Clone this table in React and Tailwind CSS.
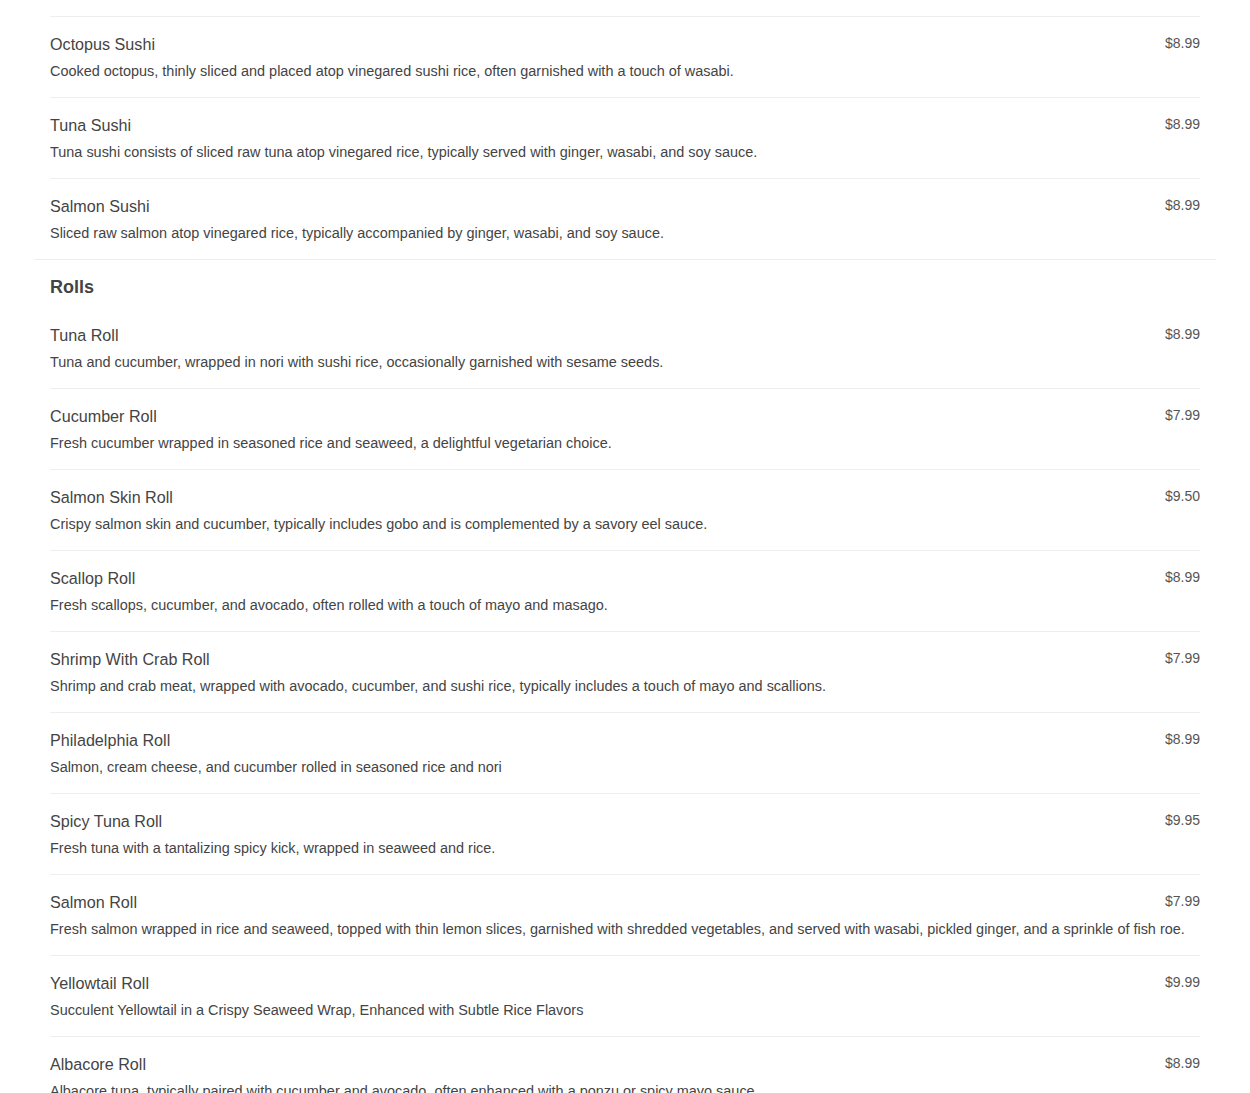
const sushi = [
  {
    name: "Yellowtail Sushi",
    description: "Fresh yellowtail slices atop vinegared rice, often garnished.",
    price: "$8.99",
  },
  {
    name: "Octopus Sushi",
    description:
      "Cooked octopus, thinly sliced and placed atop vinegared sushi rice, often garnished with a touch of wasabi.",
    price: "$8.99",
  },
  {
    name: "Tuna Sushi",
    description:
      "Tuna sushi consists of sliced raw tuna atop vinegared rice, typically served with ginger, wasabi, and soy sauce.",
    price: "$8.99",
  },
  {
    name: "Salmon Sushi",
    description:
      "Sliced raw salmon atop vinegared rice, typically accompanied by ginger, wasabi, and soy sauce.",
    price: "$8.99",
  },
];

const rolls = [
  {
    name: "Tuna Roll",
    description:
      "Tuna and cucumber, wrapped in nori with sushi rice, occasionally garnished with sesame seeds.",
    price: "$8.99",
  },
  {
    name: "Cucumber Roll",
    description:
      "Fresh cucumber wrapped in seasoned rice and seaweed, a delightful vegetarian choice.",
    price: "$7.99",
  },
  {
    name: "Salmon Skin Roll",
    description:
      "Crispy salmon skin and cucumber, typically includes gobo and is complemented by a savory eel sauce.",
    price: "$9.50",
  },
  {
    name: "Scallop Roll",
    description:
      "Fresh scallops, cucumber, and avocado, often rolled with a touch of mayo and masago.",
    price: "$8.99",
  },
  {
    name: "Shrimp With Crab Roll",
    description:
      "Shrimp and crab meat, wrapped with avocado, cucumber, and sushi rice, typically includes a touch of mayo and scallions.",
    price: "$7.99",
  },
  {
    name: "Philadelphia Roll",
    description: "Salmon, cream cheese, and cucumber rolled in seasoned rice and nori",
    price: "$8.99",
  },
  {
    name: "Spicy Tuna Roll",
    description: "Fresh tuna with a tantalizing spicy kick, wrapped in seaweed and rice.",
    price: "$9.95",
  },
  {
    name: "Salmon Roll",
    description:
      "Fresh salmon wrapped in rice and seaweed, topped with thin lemon slices, garnished with shredded vegetables, and served with wasabi, pickled ginger, and a sprinkle of fish roe.",
    price: "$7.99",
  },
  {
    name: "Yellowtail Roll",
    description: "Succulent Yellowtail in a Crispy Seaweed Wrap, Enhanced with Subtle Rice Flavors",
    price: "$9.99",
  },
  {
    name: "Albacore Roll",
    description:
      "Albacore tuna, typically paired with cucumber and avocado, often enhanced with a ponzu or spicy mayo sauce.",
    price: "$8.99",
  },
  {
    name: "California Roll",
    description: "Crab meat, avocado, and cucumber rolled in seasoned rice and seaweed.",
    price: "$7.99",
  },
];

const MenuItem = ({ item, isLast }) => (
  <div className={["py-4", isLast ? "" : "border-b border-[#eeeeee]"].join(" ")}>
    <div className="flex items-start justify-between">
      <h3 className="text-[16.15px] leading-[22px] text-[#444]">{item.name}</h3>
      <span className="ml-4 shrink-0 text-sm leading-5 text-[#555]">{item.price}</span>
    </div>
    <p className="mt-[6px] whitespace-nowrap text-[14.45px] leading-5 text-[#444]">
      {item.description}
    </p>
  </div>
);

export default function App() {
  return (
    <div className="h-[1093px] overflow-hidden bg-white font-['Liberation_Sans',Arial,sans-serif]">
      <div className="-mt-[64px] px-[34px]">
        <section className="border-b border-[#eeeeee] px-4">
          {sushi.map((item, index) => (
            <MenuItem key={item.name} item={item} isLast={index === sushi.length - 1} />
          ))}
        </section>

        <section className="px-4 pt-[13px]">
          <h2 className="mb-[7px] text-lg font-bold leading-7 text-[#444]">Rolls</h2>
          {rolls.map((item, index) => (
            <MenuItem key={item.name} item={item} isLast={index === rolls.length - 1} />
          ))}
        </section>
      </div>
    </div>
  );
}
